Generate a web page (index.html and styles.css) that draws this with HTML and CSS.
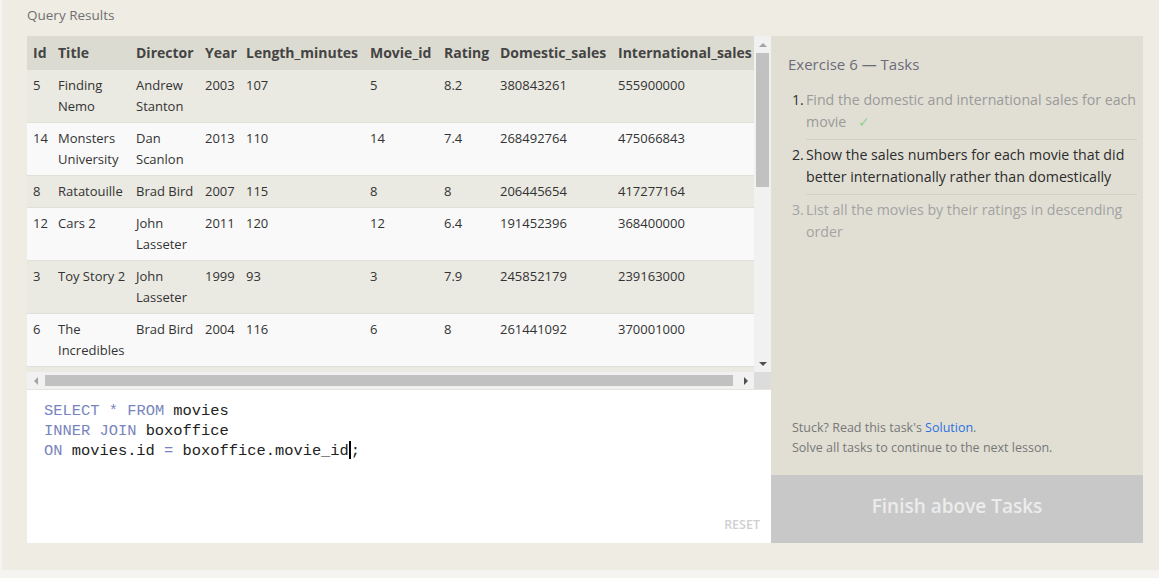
FILE: index.html
```html
<!DOCTYPE html>
<html lang="en">
<head>
<meta charset="utf-8">
<title>SQLBolt - Exercise 6</title>
<link rel="stylesheet" href="styles.css">
</head>
<body>
<div class="page">
  <div class="section-title">Query Results</div>
  <div class="workspace">
    <section class="query-panel">
      <div class="results">
        <div class="results-view">
          <table class="grid">
            <colgroup>
              <col class="c-id"><col class="c-title"><col class="c-director"><col class="c-year"><col class="c-length"><col class="c-movie"><col class="c-rating"><col class="c-dom"><col class="c-intl">
            </colgroup>
            <thead>
              <tr><th>Id</th><th>Title</th><th>Director</th><th>Year</th><th>Length_minutes</th><th>Movie_id</th><th>Rating</th><th>Domestic_sales</th><th>International_sales</th></tr>
            </thead>
            <tbody>
              <tr><td>5</td><td>Finding Nemo</td><td>Andrew Stanton</td><td>2003</td><td>107</td><td>5</td><td>8.2</td><td>380843261</td><td>555900000</td></tr>
              <tr><td>14</td><td>Monsters University</td><td>Dan Scanlon</td><td>2013</td><td>110</td><td>14</td><td>7.4</td><td>268492764</td><td>475066843</td></tr>
              <tr><td>8</td><td>Ratatouille</td><td>Brad Bird</td><td>2007</td><td>115</td><td>8</td><td>8</td><td>206445654</td><td>417277164</td></tr>
              <tr><td>12</td><td>Cars 2</td><td>John Lasseter</td><td>2011</td><td>120</td><td>12</td><td>6.4</td><td>191452396</td><td>368400000</td></tr>
              <tr><td>3</td><td>Toy Story 2</td><td>John Lasseter</td><td>1999</td><td>93</td><td>3</td><td>7.9</td><td>245852179</td><td>239163000</td></tr>
              <tr><td>6</td><td>The Incredibles</td><td>Brad Bird</td><td>2004</td><td>116</td><td>6</td><td>8</td><td>261441092</td><td>370001000</td></tr>
              <tr><td>9</td><td>WALL-E</td><td>Andrew Stanton</td><td>2008</td><td>104</td><td>9</td><td>8.5</td><td>223808164</td><td>297503696</td></tr>
              <tr><td>11</td><td>Toy Story 3</td><td>Lee Unkrich</td><td>2010</td><td>103</td><td>11</td><td>8.4</td><td>415004880</td><td>648167031</td></tr>
              <tr><td>1</td><td>Toy Story</td><td>John Lasseter</td><td>1995</td><td>81</td><td>1</td><td>8.3</td><td>191796233</td><td>170162503</td></tr>
              <tr><td>7</td><td>Cars</td><td>John Lasseter</td><td>2006</td><td>117</td><td>7</td><td>7.2</td><td>244082982</td><td>217900167</td></tr>
              <tr><td>10</td><td>Up</td><td>Pete Docter</td><td>2009</td><td>101</td><td>10</td><td>8.3</td><td>293004164</td><td>438338580</td></tr>
              <tr><td>4</td><td>Monsters, Inc.</td><td>Pete Docter</td><td>2001</td><td>92</td><td>4</td><td>8.1</td><td>289916256</td><td>272900000</td></tr>
              <tr><td>2</td><td>A Bug's Life</td><td>John Lasseter</td><td>1998</td><td>95</td><td>2</td><td>7.2</td><td>162798565</td><td>200600000</td></tr>
              <tr><td>13</td><td>Brave</td><td>Brenda Chapman</td><td>2012</td><td>102</td><td>13</td><td>7.2</td><td>237283207</td><td>301700000</td></tr>
            </tbody>
          </table>
        </div>
        <div class="vscroll">
          <span class="sb-btn"><span class="tri tri-up"></span></span>
          <span class="sb-thumb-v"></span>
          <span class="sb-fill"></span>
          <span class="sb-btn"><span class="tri tri-down"></span></span>
        </div>
        <div class="hscroll">
          <span class="sb-btn"><span class="tri tri-left"></span></span>
          <span class="sb-thumb-h"></span>
          <span class="sb-btn"><span class="tri tri-right"></span></span>
        </div>
        <div class="sb-corner"></div>
      </div>
      <div class="editor">
<pre class="code"><span class="kw">SELECT</span> <span class="kw">*</span> <span class="kw">FROM</span> movies
<span class="kw">INNER</span> <span class="kw">JOIN</span> boxoffice
<span class="kw">ON</span> movies.id <span class="kw">=</span> boxoffice.movie_id<span class="caret"></span>;</pre>
        <div class="reset">RESET</div>
      </div>
    </section>
    <aside class="tasks-panel">
      <h3 class="tasks-title">Exercise 6 — Tasks</h3>
      <ol class="tasks">
        <li class="task done"><span class="num">1.</span><span class="text">Find the domestic and international sales for each movie <span class="check">✓</span></span></li>
        <li class="task active"><span class="num">2.</span><span class="text">Show the sales numbers for each movie that did better internationally rather than domestically</span></li>
        <li class="task todo"><span class="num">3.</span><span class="text">List all the movies by their ratings in descending order</span></li>
      </ol>
      <div class="stuck">
        <div>Stuck? Read this task's <a class="solution" href="#">Solution</a>.</div>
        <div>Solve all tasks to continue to the next lesson.</div>
      </div>
      <div class="finish">Finish above Tasks</div>
    </aside>
  </div>
</div>
</body>
</html>
```

FILE: styles.css
```css
* { box-sizing: border-box; }

html, body {
  margin: 0;
  padding: 0;
}

body {
  background: #f5f4f0;
  font-family: "Open Sans", "Noto Sans", sans-serif;
  color: #333;
}

.page {
  margin-left: 2px;
  height: 570px;
  background: #efece4;
  padding: 5px 0 0 25px;
}

.section-title {
  font-size: 13.5px;
  line-height: 20px;
  color: #707070;
}

.workspace {
  margin-top: 11px;
  width: 1116px;
  height: 507px;
  display: flex;
}

/* ---------- left: results + editor ---------- */
.query-panel {
  width: 744px;
  display: flex;
  flex-direction: column;
  background: #fff;
}

.results {
  display: grid;
  grid-template-columns: 1fr 17px;
  grid-template-rows: 336px 17px;
}

.results-view {
  overflow: hidden;
  background: #f9f9f9;
}

.grid {
  border-collapse: collapse;
  table-layout: fixed;
  width: 732px;
  font-size: 13px;
  line-height: 21px;
  color: #333;
}

.c-id { width: 26px; }
.c-title { width: 78px; }
.c-director { width: 69px; }
.c-year { width: 41px; }
.c-length { width: 124px; }
.c-movie { width: 74px; }
.c-rating { width: 56px; }
.c-dom { width: 118px; }
.c-intl { width: 146px; }

.grid th {
  background: #dcdbd1;
  text-align: left;
  font-weight: 700;
  font-size: 14px;
  color: #444;
  padding: 6px 5px 7px;
  white-space: nowrap;
}

.grid td {
  padding: 5px 4px 5px 5px;
  vertical-align: top;
  border-bottom: 1px solid #e0dfd8;
}

.grid th:first-child,
.grid td:first-child { padding-left: 6px; }

.grid tbody tr:nth-child(odd) td { background: #eae9e2; }
.grid tbody tr:nth-child(even) td { background: #f9f9f9; }

/* scrollbars */
.vscroll {
  display: flex;
  flex-direction: column;
  background: #f1f1f1;
}

.hscroll {
  display: flex;
  background: #f1f1f1;
}

.sb-btn {
  width: 17px;
  height: 17px;
  flex: none;
  display: flex;
  align-items: center;
  justify-content: center;
}

.sb-thumb-v {
  height: 134px;
  margin: 0 2px;
  background: #c1c1c1;
  flex: none;
}

.sb-fill { flex: 1; }

.sb-thumb-h {
  flex: 1;
  margin: 3px 4px 3px 1px;
  background: #c1c1c1;
}

.sb-corner { background: #dcdcdc; }

.tri { width: 0; height: 0; border: 4px solid transparent; }
.tri-up { border-bottom-color: #a3a3a3; border-top-width: 0; border-bottom-width: 4px; }
.tri-down { border-top-color: #505050; border-bottom-width: 0; border-top-width: 4px; }
.tri-left { border-right-color: #a3a3a3; border-left-width: 0; border-right-width: 4px; }
.tri-right { border-left-color: #505050; border-right-width: 0; border-left-width: 4px; }

/* editor */
.editor {
  flex: 1;
  display: flex;
  flex-direction: column;
  border-top: 1px solid #e6e5dc;
  padding: 11px 11px 12px 17px;
  background: #fff;
}

.code {
  margin: 0;
  font-family: "Liberation Mono", "DejaVu Sans Mono", monospace;
  font-size: 15.4px;
  line-height: 20px;
  color: #222;
}

.kw { color: #7884bd; }

.caret {
  display: inline-block;
  width: 2px;
  height: 18px;
  background: #000;
  vertical-align: -4px;
}

.reset {
  margin-top: auto;
  align-self: flex-end;
  font-size: 12.5px;
  font-weight: 600;
  color: #d0d0d0;
  line-height: 14px;
  margin-bottom: -1px;
}

/* ---------- right: tasks ---------- */
.tasks-panel {
  width: 372px;
  background: #e1dfd4;
  display: flex;
  flex-direction: column;
}

.tasks-title {
  margin: 18px 0 0 17px;
  font-size: 15px;
  font-weight: 400;
  line-height: 20px;
  color: #6c6b7a;
}

.tasks {
  list-style: none;
  margin: 11px 0 0;
  padding: 0 6px 0 21px;
  font-size: 14.2px;
  line-height: 22px;
}

.task {
  display: flex;
}

.task .num {
  width: 14px;
  flex: none;
  padding-top: 4px;
}

.task .text {
  flex: 1;
  padding: 4px 0 6px;
  border-bottom: 1px solid #d2d0c5;
}

.task:last-child .text { border-bottom: 0; }

.done .num { color: #333; }
.done .text { color: #9a9a9a; }
.active .num, .active .text { color: #2c2c2c; }
.todo .num, .todo .text { color: #a3a3a3; }

.check {
  color: #8ed18e;
  margin-left: 8px;
}

.stuck {
  margin-top: auto;
  padding: 0 17px 17px 21px;
  font-size: 12.5px;
  line-height: 20px;
  color: #777;
}

.solution {
  color: #2d6fe0;
  text-decoration: none;
}

.finish {
  height: 68px;
  flex: none;
  background: #c8c8c8;
  color: #ececec;
  font-size: 19px;
  font-weight: 600;
  display: flex;
  align-items: center;
  justify-content: center;
  padding-bottom: 6px;
}
```
